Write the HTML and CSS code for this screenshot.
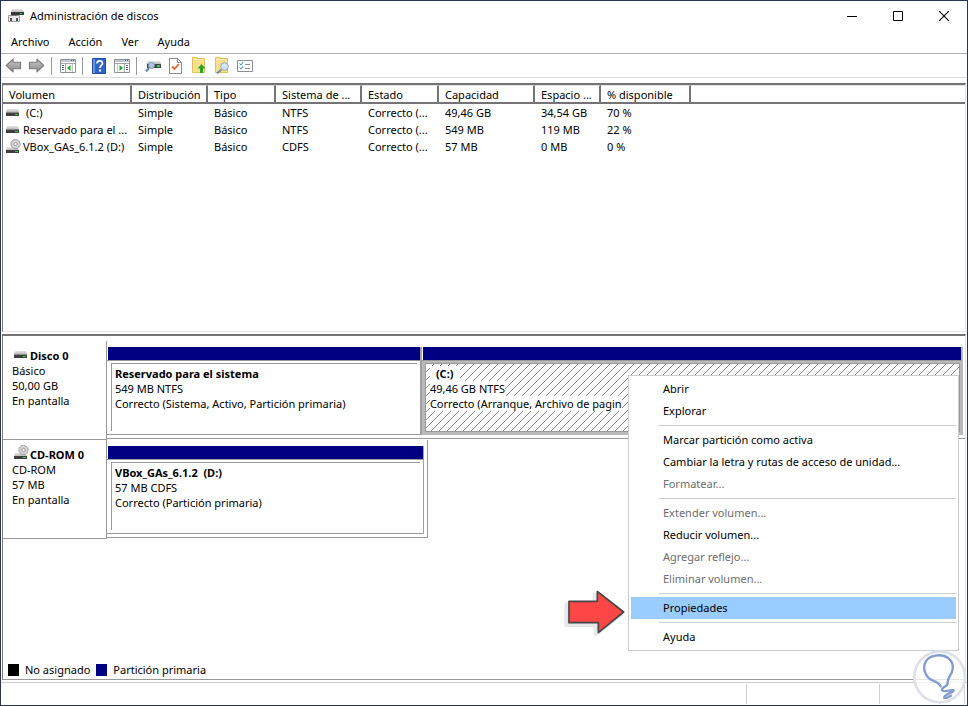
FILE: index.html
```html
<!DOCTYPE html>
<html lang="es">
<head>
<meta charset="utf-8">
<title>Administración de discos</title>
<link rel="stylesheet" href="styles.css">
</head>
<body>
<svg class="defs" aria-hidden="true">
  <defs>
    <linearGradient id="metal" x1="0" y1="0" x2="0" y2="1"><stop offset="0" stop-color="#e4e4e4"/><stop offset="1" stop-color="#bcbcbc"/></linearGradient>
    <linearGradient id="arrowfill" x1="0" y1="0" x2="0" y2="1"><stop offset="0" stop-color="#c8c8c8"/><stop offset="1" stop-color="#8a8a8a"/></linearGradient>
    <symbol id="drive" viewBox="0 0 13 8">
      <path d="M1 0h11l1 3H0z" fill="url(#metal)"/>
      <path d="M0 3h13v4H0z" fill="#3f3f3f"/><path d="M0 3h13v1H0z" fill="#8a8a8a"/>
      <path d="M9 5h3v1H9z" fill="#2bd43a"/>
    </symbol>
    <symbol id="cdrom" viewBox="0 0 15 15">
      <path d="M1 8h10l2 3H0z" fill="url(#metal)"/>
      <path d="M0 11h13v3H0z" fill="#3f3f3f"/><path d="M9 12h3v1H9z" fill="#2bd43a"/>
      <circle cx="9.500" cy="5" r="4.600" fill="#d6d6d6" stroke="#8f8f8f" stroke-width=".8"/>
      <circle cx="9.500" cy="5" r="1.700" fill="#fff" stroke="#8f8f8f" stroke-width=".9"/>
    </symbol>
    <symbol id="arrow" viewBox="0 0 17 16">
      <path d="M.8 8 8 1.200V4.500h8v7H8v3.300z" fill="url(#arrowfill)" stroke="#7a7a7a" stroke-width="1.200" stroke-linejoin="round"/>
    </symbol>
    <symbol id="pane" viewBox="0 0 16 14">
      <path d="M.5.5h15v13H.5z" fill="#fff" stroke="#8b9096"/>
      <path d="M1 1h14v2H1z" fill="#c4c8cc"/><path d="M11 1h1v1h-1zM13 1h1v1h-1z" fill="#4e6e96"/>
      <path d="M1 4h14v1H1z" fill="#a4a8ad"/>
    </symbol>
    <symbol id="folder" viewBox="0 0 16 17">
      <path d="M1.500.5h4.500v1h7.500v14h-12z" fill="#fbe08b" stroke="#e5bf58"/>
      <path d="M2 2h11v1H2z" fill="#fff0b8"/>
    </symbol>
  </defs>
</svg>

<div class="window">
  <header class="titlebar">
    <svg class="app-icon" width="16" height="16" viewBox="0 0 16 16" aria-hidden="true">
      <path d="M4 1h10l2 3H3z" fill="url(#metal)"/><path d="M3 4h13v3H3z" fill="#3a3a3a"/><path d="M12 5h2v1h-2z" fill="#2bd43a"/>
      <path d="M.5 7.500h11v6H.5z" fill="#e9e9e9" stroke="#9b9b9b"/><path d="M3 7h6v1H3z" fill="#777"/><path d="M2 10h2v3H2zM8 10h2v3H8z" fill="#555"/>
    </svg>
    <h1>Administración de discos</h1>
    <div class="captions">
      <button type="button" aria-label="Minimizar"><svg width="10" height="10" viewBox="0 0 10 10"><path d="M0 5h10v1H0z"/></svg></button>
      <button type="button" aria-label="Maximizar"><svg width="10" height="10" viewBox="0 0 10 10"><path d="M.5.5h9v9h-9z" fill="none" stroke="#000"/></svg></button>
      <button type="button" aria-label="Cerrar"><svg width="10" height="10" viewBox="0 0 10 10"><path d="M0 0l10 10M10 0L0 10" fill="none" stroke="#000" stroke-width="1.100"/></svg></button>
    </div>
  </header>

  <nav class="menubar">
    <button type="button">Archivo</button>
    <button type="button">Acción</button>
    <button type="button">Ver</button>
    <button type="button">Ayuda</button>
  </nav>

  <div class="toolbar">
    <button type="button" aria-label="Atrás"><svg width="17" height="15"><use href="#arrow"/></svg></button>
    <button type="button" aria-label="Adelante"><svg class="flip" width="17" height="15"><use href="#arrow"/></svg></button>
    <span class="divider"></span>
    <button type="button" aria-label="Mostrar árbol"><svg width="16" height="14" viewBox="0 0 16 14"><use href="#pane"/><path d="M2 6h2v1H2zM2 8h2v1H2zM2 10h2v1H2z" fill="#4e6e96"/><path d="M5 5h1v8H5z" fill="#a4a8ad"/><path d="M12 5h1v8h-1z" fill="#c4c8cc"/><path d="M10.500 6v6L7 9z" fill="#22a822"/></svg></button>
    <span class="divider"></span>
    <button type="button" aria-label="Ayuda"><svg width="14" height="16" viewBox="0 0 14 16"><path d="M.5.5h13v15H.5z" fill="#2f63c8" stroke="#234a9c"/><path d="M1 1h2v14H1z" fill="#6c94e2"/><path d="M5 5.500C5 2 10.500 2 10.500 5.200 10.500 7.500 8 7.400 8 10" fill="none" stroke="#fff" stroke-width="1.700"/><path d="M7 11.500h2v2H7z" fill="#fff"/></svg></button>
    <button type="button" aria-label="Panel de acciones"><svg width="16" height="14" viewBox="0 0 16 14"><use href="#pane"/><path d="M10 5h1v8h-1z" fill="#a4a8ad"/><path d="M3 5h1v8H3z" fill="#c4c8cc"/><path d="M12 6h2v1h-2zM12 8h2v1h-2zM12 10h2v1h-2z" fill="#4e6e96"/><path d="M5.500 6v6L9 9z" fill="#22a822"/></svg></button>
    <span class="divider"></span>
    <button type="button" aria-label="Examinar discos"><svg width="16" height="14" viewBox="0 0 16 14"><path d="M3 2h12l1 3H1z" fill="url(#metal)"/><path d="M2 5h14v4H2z" fill="#454545"/><path d="M12 6h3v2h-3z" fill="#2bd43a"/><path d="M4 9 1 12.500" stroke="#5c85b5" stroke-width="2"/><circle cx="6.500" cy="6.500" r="3" fill="#b9d5ee" fill-opacity=".9" stroke="#7793b2"/></svg></button>
    <button type="button" aria-label="Comprobar"><svg width="13" height="16" viewBox="0 0 13 16"><path d="M.5.5h8l4 4v11H.5z" fill="#fff" stroke="#8b8b8b"/><path d="M8.500.5v4h4" fill="none" stroke="#8b8b8b"/><path d="M3 8.500 5.500 11 10 6" fill="none" stroke="#e2642a" stroke-width="1.800"/></svg></button>
    <button type="button" aria-label="Subir"><svg width="16" height="17" viewBox="0 0 16 17"><use href="#folder"/><path d="M10.500 7 14.500 11.500H12V16H9v-4.500H6.500z" fill="#25a52b"/></svg></button>
    <button type="button" aria-label="Buscar"><svg width="16" height="17" viewBox="0 0 16 17"><use href="#folder"/><path d="M7.500 12.500 3 16.500" stroke="#6d8db5" stroke-width="2"/><circle cx="10.500" cy="9.500" r="3.800" fill="#d3e7f8" stroke="#8aa7c6"/></svg></button>
    <button type="button" aria-label="Propiedades"><svg width="16" height="12" viewBox="0 0 16 12"><path d="M.5.5h15v11H.5z" fill="#fff" stroke="#8b9096"/><path d="M2.500 3.500 4 5l2-3M2.500 7.500 4 9l2-3" fill="none" stroke="#3b8bd0"/><path d="M8 4h5v1H8zM8 8h5v1H8z" fill="#8b9096"/></svg></button>
  </div>

  <main class="panes">
    <section class="volumes">
      <table>
        <colgroup><col class="c-vol"><col class="c-dist"><col class="c-type"><col class="c-fs"><col class="c-state"><col class="c-cap"><col class="c-free"><col class="c-pct"><col></colgroup>
        <thead>
          <tr><th>Volumen</th><th>Distribución</th><th>Tipo</th><th>Sistema de ...</th><th>Estado</th><th>Capacidad</th><th>Espacio ...</th><th>% disponible</th><th></th></tr>
        </thead>
        <tbody>
          <tr><td><span class="name"><svg width="13" height="8"><use href="#drive"/></svg><span class="letter">(C:)</span></span></td><td>Simple</td><td>Básico</td><td>NTFS</td><td>Correcto (...</td><td>49,46 GB</td><td>34,54 GB</td><td>70 %</td><td></td></tr>
          <tr><td><span class="name"><svg width="13" height="8"><use href="#drive"/></svg>Reservado para el ...</span></td><td>Simple</td><td>Básico</td><td>NTFS</td><td>Correcto (...</td><td>549 MB</td><td>119 MB</td><td>22 %</td><td></td></tr>
          <tr><td><span class="name"><svg width="15" height="15"><use href="#cdrom"/></svg>VBox_GAs_6.1.2 (D:)</span></td><td>Simple</td><td>Básico</td><td>CDFS</td><td>Correcto (...</td><td>57 MB</td><td>0 MB</td><td>0 %</td><td></td></tr>
        </tbody>
      </table>
    </section>

    <section class="graph">
      <div class="disk">
        <div class="disk-info">
          <h2><svg width="13" height="8"><use href="#drive"/></svg>Disco 0</h2>
          <p>Básico</p><p>50,00 GB</p><p>En pantalla</p>
        </div>
        <div class="parts">
          <div class="part part-system">
            <div class="bar"></div>
            <div class="box"><div class="inner"><p><b>Reservado para el sistema</b></p><p>549 MB NTFS</p><p>Correcto (Sistema, Activo, Partición primaria)</p></div></div>
          </div>
          <div class="part part-c selected">
            <div class="bar"></div>
            <div class="box"><div class="inner">
              <svg class="hatch" width="100%" height="100%" aria-hidden="true"><defs><pattern id="diag" width="8" height="8" patternUnits="userSpaceOnUse"><path d="M7 0h1v1H7zM6 1h1v1H6zM5 2h1v1H5zM4 3h1v1H4zM3 4h1v1H3zM2 5h1v1H2zM1 6h1v1H1zM0 7h1v1H0z" fill="#8c8c8c" shape-rendering="crispEdges"/></pattern></defs><rect width="100%" height="100%" fill="url(#diag)"/></svg>
              <p><b class="letter-label">(C:)</b></p><p><span>49,46 GB NTFS</span></p><p><span>Correcto (Arranque, Archivo de pagin</span></p>
            </div></div>
          </div>
        </div>
      </div>

      <div class="disk">
        <div class="disk-info">
          <h2><svg class="cd" width="15" height="15"><use href="#cdrom"/></svg>CD-ROM 0</h2>
          <p>CD-ROM</p><p>57 MB</p><p>En pantalla</p>
        </div>
        <div class="parts parts-cd">
          <div class="part">
            <div class="bar"></div>
            <div class="box"><div class="inner"><p><b>VBox_GAs_6.1.2&nbsp; (D:)</b></p><p>57 MB CDFS</p><p>Correcto (Partición primaria)</p></div></div>
          </div>
        </div>
      </div>

      <footer class="legend">
        <span class="swatch unallocated"></span><span>No asignado</span>
        <span class="swatch primary"></span><span>Partición primaria</span>
      </footer>
    </section>
  </main>

  <div class="statusbar"><span></span><span class="status-mid"></span><span class="status-end"></span></div>

  <div class="context" role="menu">
    <button type="button" role="menuitem">Abrir</button>
    <button type="button" role="menuitem">Explorar</button>
    <hr>
    <button type="button" role="menuitem">Marcar partición como activa</button>
    <button type="button" role="menuitem">Cambiar la letra y rutas de acceso de unidad...</button>
    <button type="button" role="menuitem" disabled>Formatear...</button>
    <hr>
    <button type="button" role="menuitem" disabled>Extender volumen...</button>
    <button type="button" role="menuitem">Reducir volumen...</button>
    <button type="button" role="menuitem" disabled>Agregar reflejo...</button>
    <button type="button" role="menuitem" disabled>Eliminar volumen...</button>
    <hr>
    <button type="button" role="menuitem" class="active">Propiedades</button>
    <hr>
    <button type="button" role="menuitem">Ayuda</button>
  </div>

  <svg class="pointer" width="63" height="48" viewBox="9 324 189 144" aria-hidden="true">
    <path d="M18 372H104V342L184 404L106 464V436H18Z" fill="#dfe2e4" stroke="#e6e8ea" stroke-width="10" stroke-linejoin="round"/>
    <path d="M27 364H112V334L191 396L115 458V428H27Z" fill="#fd4646" stroke="#474747" stroke-width="5" stroke-linejoin="round"/>
  </svg>

  <svg class="watermark" width="58" height="58" viewBox="1050 505 174 174" aria-hidden="true">
    <circle cx="1139" cy="592" r="76" fill="#fff" fill-opacity=".75" stroke="#dfe1e8" stroke-width="8"/>
    <path d="M1142 620C1136 604 1114 606 1103 592C1084 568 1091 533 1126 528C1158 522 1182 542 1178 568C1175 586 1164 592 1163 607M1163 607C1166 622 1145 620 1146 632C1150 640 1178 627 1181 632C1180 640 1149 644 1153 655C1160 657 1168 651 1173 648" fill="none" stroke="#809dcd" stroke-width="7" stroke-linecap="round"/>
  </svg>
</div>
</body>
</html>
```
FILE: styles.css
```css
* { box-sizing: border-box; }

body {
  margin: 0;
  color: #000;
  background: #fff;
  font: 11px/15px "Noto Sans", "Open Sans", sans-serif;
}

h1, h2, p { margin: 0; font-size: 11px; font-weight: 400; white-space: nowrap; }
button { margin: 0; padding: 0; border: 0; background: none; color: inherit; font: inherit; }
svg { display: block; flex: none; }
.defs { position: absolute; width: 0; height: 0; }

.window {
  position: relative;
  display: flex;
  flex-direction: column;
  height: 100vh;
  min-height: 560px;
  border: 1px solid #2b3553;
  overflow: hidden;
}

.titlebar { display: flex; align-items: center; height: 29px; padding-left: 7px; }
.titlebar h1 { margin-left: 6px; flex: 1; }
.captions { display: flex; }
.captions button { display: grid; place-items: center; width: 46px; height: 28px; }

.menubar { display: flex; align-items: center; gap: 19px; height: 23px; padding-left: 10px; }

.toolbar {
  display: flex;
  align-items: center;
  height: 25px;
  padding-left: 1px;
  border-top: 1px solid #b0b0b0;
  border-bottom: 1px solid #dcdcdc;
}
.toolbar button { display: grid; place-items: center; width: 23px; height: 23px; }
.toolbar .divider { width: 1px; height: 18px; margin: 0 4px 0 3px; background: #9a9a9a; }
.flip { transform: scaleX(-1); }

.panes {
  display: flex;
  flex: 1;
  flex-direction: column;
  gap: 2px;
  min-height: 0;
  padding: 5px 1px 0;
}

.volumes {
  flex: 249 1 0;
  min-height: 0;
  border: 1px solid #7c7c7c;
  border-top: 2px solid #757375;
  border-color: #757375 #e3e3e3 #e3e3e3 #7c7c7c;
}
.volumes table { width: 100%; border-collapse: separate; border-spacing: 0; table-layout: fixed; }
.volumes th, .volumes td { padding: 0 0 0 6px; font-weight: 400; text-align: left; white-space: nowrap; }
.volumes th {
  height: 19px;
  border-top: 1px solid #e3e3e3;
  border-right: 2px solid #757375;
  border-bottom: 2px solid #757375;
}
.volumes th:last-child { border-right: 0; }
.volumes td { height: 17px; }
.volumes td:first-child { padding-left: 3px; }
.c-vol { width: 129px; }
.c-dist { width: 76px; }
.c-type { width: 68px; }
.c-fs { width: 86px; }
.c-state { width: 77px; }
.c-cap { width: 96px; }
.c-free { width: 66px; }
.c-pct { width: 90px; }
.name { display: flex; align-items: center; gap: 4px; height: 17px; }
.name svg[width="15"] { margin-right: -2px; }
.letter { padding-left: 3px; }

.graph {
  display: flex;
  flex: 343 1 0;
  flex-direction: column;
  min-height: 0;
  border: 1px solid #7c7c7c;
  border-top: 2px solid #757375;
  border-color: #757375 #e3e3e3 #999 #7c7c7c;
  padding-top: 5px;
}

.disk { display: flex; height: 99px; }
.disk-info {
  flex: none;
  width: 104px;
  padding: 7px 0 0 9px;
  border-right: 1px solid #999;
  border-bottom: 1px solid #999;
}
.disk-info h2 { display: flex; align-items: center; gap: 3px; padding-left: 2px; font-weight: 700; }
.disk-info .cd { margin: -4px -2px 0 0; }

.parts {
  display: flex;
  flex: 1;
  min-width: 0;
  height: 98px;
  padding: 6px 2px 3px 0;
  border-bottom: 1px solid #999;
}
.part { display: flex; flex-direction: column; min-width: 0; border-right: 2px solid #a0a0a0; }
.part-system { flex: 314 1 0; }
.part-c { flex: 541 1 0; }
.part .bar { height: 13px; margin-left: 1px; background: #000080; }
.part .box { flex: 1; min-height: 0; padding: 2px 3px 3px 4px; border: solid #999; border-width: 1px 0; }
.inner { position: relative; height: 100%; padding: 2px 0 0 3px; border: solid #999; border-width: 1px 0 0 1px; overflow: hidden; }
.part b { font-weight: 700; }

.selected { border-right-color: #b9b9b9; }
.selected .box { padding: 2px 1px 2px 3px; border-bottom-color: #b9b9b9; background: #b9b9b9; }
.selected .inner { border-width: 1px; padding-left: 4px; background: #fff; }
.selected p { position: relative; }
.selected b, .selected span { background: #fff; }
.hatch { position: absolute; top: 0; left: 0; }
.letter-label { padding: 0 6px; }

.parts-cd { flex: 0 0 321px; border-right: 1px solid #999; padding-right: 3px; }
.parts-cd .part { flex: 1; border-right-width: 1px; }

.legend { display: flex; align-items: center; gap: 6px; margin-top: auto; padding: 0 0 2px 5px; }
.swatch { width: 11px; height: 12px; }
.unallocated { background: #000; }
.primary { background: #000080; }

.statusbar {
  display: flex;
  height: 23px;
  margin-top: 2px;
  padding: 1px 2px 1px 0;
  border-top: 1px solid #d0d0d0;
}
.statusbar span { flex: 1; border-right: 1px solid #d0d0d0; }
.statusbar .status-mid { flex: 0 0 133px; }
.statusbar .status-end { flex: 0 0 85px; }

.context {
  position: absolute;
  top: 374px;
  left: 627px;
  width: 331px;
  padding: 2px;
  border: 1px solid #ccc;
  background: #fff;
}
.context button { display: block; width: 100%; height: 22px; padding: 0 0 2px 32px; text-align: left; white-space: nowrap; }
.context button:disabled { color: #6d6d6d; }
.context .active { background: #99ccff; }
.context hr { height: 1px; margin: 3px 0 3px 28px; border: 0; background: #ccc; }

.pointer { position: absolute; top: 587px; left: 562px; }
.watermark { position: absolute; right: -1px; bottom: -1px; }
```
